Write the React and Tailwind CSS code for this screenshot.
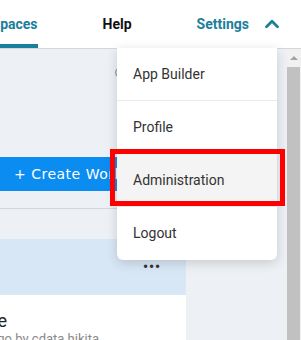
import { ChevronUp, Search } from "lucide-react";

const menuItems = ["App Builder", "Profile", "Administration", "Logout"];

function App() {
  return (
    <div className="relative w-[301px] h-[340px] overflow-hidden bg-[#edf1f5] font-['Roboto',sans-serif]">
      {/* top nav */}
      <div className="h-[49px] bg-white border-b border-[#d3d6da] flex justify-end items-stretch pr-[18px] overflow-hidden whitespace-nowrap">
        <div className="flex items-center pt-[4px] border-b-[4px] border-[#1b7e9c] text-[14px] font-bold text-[#1b7e9c]">
          Workspaces
        </div>
        <div className="flex items-center ml-[65px] text-[14px] font-bold text-[#111]">Help</div>
        <div className="flex items-center ml-[65px] text-[14px] font-bold text-[#1b7e9c]">Settings</div>
        <div className="flex items-center ml-[12px] text-[#1b7e9c]">
          <ChevronUp size={22} strokeWidth={3} />
        </div>
      </div>

      {/* body */}
      <div className="flex h-[291px]">
        <div className="flex-1 min-w-0">
          <div className="w-[186px]">
            <div className="h-[108px] pl-[114px] pt-[17px] text-[#8a8f95]">
              <Search size={14} strokeWidth={2} />
            </div>
            <button className="w-full h-[34px] bg-[#0a8cf0] text-white text-left pl-[14px] text-[14px] font-['DejaVu_Sans',sans-serif] tracking-[0.5px] whitespace-nowrap">
              + Create Workspace
            </button>
            <div className="h-[18px] border-b border-[#d2d6db]" />
            <div className="mt-[30px]">
              <div className="h-[56px] bg-[#d8e7f6] flex justify-end items-center pr-[25px] pt-[1px]">
                <span className="text-[#333] text-[14px] font-bold tracking-[1px]">•••</span>
              </div>
              <div className="h-[60px] bg-white pt-[16px] whitespace-nowrap">
                <div className="flex justify-end w-[7px] text-[18px] leading-[20px] text-[#222]">
                  My Workspace
                </div>
                <div className="flex justify-end w-[99px] text-[13px] leading-[16px] text-[#8a8a8a]">
                  Updated 2 days ago by cdata hikita
                </div>
              </div>
            </div>
          </div>
        </div>
        {/* scrollbar */}
        <div className="w-[15px] bg-[#f1f1f1] flex flex-col items-center">
          <div className="h-[18px] flex items-center justify-center">
            <div className="w-0 h-0 border-l-[4px] border-r-[4px] border-b-[4px] border-l-transparent border-r-transparent border-b-[#a3a3a3]" />
          </div>
          <div className="flex-1 w-[13px] bg-[#c1c1c1]" />
        </div>
      </div>

      {/* settings dropdown */}
      <div className="absolute top-[48px] left-[117px] w-[160px] bg-white rounded-b-[6px] shadow-[0_3px_12px_rgba(0,0,0,0.16)] divide-y divide-[#ebebeb]">
        {menuItems.map((item) => (
          <div
            key={item}
            className={`relative h-[53px] flex items-center pl-[16px] text-[14px] text-[#333] ${
              item === "Administration" ? "bg-[#f4f4f4]" : ""
            } ${item === "Logout" ? "rounded-b-[6px]" : ""}`}
          >
            {item}
            {item === "Administration" && (
              <div className="absolute -left-[7px] -right-[8px] -top-[5px] bottom-0 border-[5px] border-[#ff0000]" />
            )}
          </div>
        ))}
      </div>
    </div>
  );
}

export default App;
